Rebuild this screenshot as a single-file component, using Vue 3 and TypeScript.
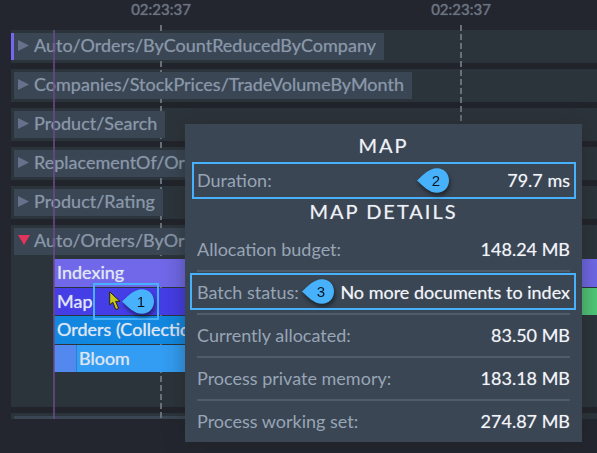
<script setup lang="ts">
import { ref } from 'vue'

interface Track {
  name: string
  active?: boolean
  expanded?: boolean
}

interface Detail {
  label: string
  value: string
  marker?: number
}

const times: string[] = ['02:23:37', '02:23:37']

const tracks = ref<Track[]>([
  { name: 'Auto/Orders/ByCountReducedByCompany', active: true },
  { name: 'Companies/StockPrices/TradeVolumeByMonth' },
  { name: 'Product/Search' },
  { name: 'ReplacementOf/Or' },
  { name: 'Product/Rating' },
  { name: 'Auto/Orders/ByOr', expanded: true },
])

const details: Detail[] = [
  { label: 'Allocation budget:', value: '148.24 MB' },
  { label: 'Batch status:', value: 'No more documents to index', marker: 3 },
  { label: 'Currently allocated:', value: '83.50 MB' },
  { label: 'Process private memory:', value: '183.18 MB' },
  { label: 'Process working set:', value: '274.87 MB' },
]

const dropPath =
  'M0 12.5 C6 7 12 0.2 20 0.2 C27 0.2 32 5.5 32 12.5 C32 19.5 27 24.8 20 24.8 C12 24.8 6 18 0 12.5 Z'
</script>

<template>
  <main class="view">
    <header class="scale">
      <time v-for="(t, i) in times" :key="i" class="tick">{{ t }}</time>
    </header>

    <section class="tracks">
      <div class="grid-lines" aria-hidden="true">
        <span v-for="(t, i) in times" :key="i" class="line-cell"><i class="dash"></i></span>
      </div>

      <div v-for="track in tracks" :key="track.name" class="track" :class="{ active: track.active, expanded: track.expanded }">
        <button type="button" class="name" :aria-expanded="!!track.expanded" @click="track.expanded = !track.expanded">
          <svg v-if="track.expanded" class="arrow" viewBox="0 0 12 12"><path d="M0 0H12L6 10Z" fill="#e0345c" /></svg>
          <svg v-else class="arrow" viewBox="0 0 12 12"><path d="M0 0L11 5.5L0 11Z" fill="#66728b" /></svg>
          <span>{{ track.name }}</span>
        </button>
        <div v-if="track.expanded" class="bars">
          <div class="bar indexing">Indexing</div>
          <div class="bar-row">
            <div class="bar map">
              <span>Map</span>
              <span class="frame frame-map">
                <svg class="cursor" viewBox="0 0 12 20"><path d="M0.7 0.8V14L3.8 11.2L6.8 18.6L9.6 17.4L6.6 10.4H11Z" fill="#c9c916" stroke="#26260c" stroke-width="1" /></svg>
                <svg class="drop" viewBox="0 0 32 25"><path :d="dropPath" fill="#47b2fb" /><text x="19" y="18" text-anchor="middle">1</text></svg>
              </span>
            </div>
            <div class="bar reduce"></div>
          </div>
          <div class="bar orders">Orders (Collectio</div>
          <div class="bar-row inner">
            <div class="bar stub"></div>
            <div class="bar bloom">Bloom</div>
          </div>
        </div>
      </div>

      <div class="track cut"><div class="cut-name"></div></div>
      <div class="start-line" aria-hidden="true"></div>
    </section>

    <aside class="tooltip" role="tooltip">
      <h2>MAP</h2>
      <dl>
        <div class="row duration">
          <dt>Duration:</dt>
          <dd>79.7 ms</dd>
          <span class="frame frame-duration"></span>
          <svg class="drop" viewBox="0 0 32 25"><path :d="dropPath" fill="#47b2fb" /><text x="19" y="18" text-anchor="middle">2</text></svg>
        </div>
      </dl>
      <h2 class="details-title">MAP DETAILS</h2>
      <dl>
        <div v-for="d in details" :key="d.label" class="row">
          <dt>{{ d.label }}</dt>
          <svg v-if="d.marker" class="drop" viewBox="0 0 32 25"><path :d="dropPath" fill="#47b2fb" /><text x="19" y="18" text-anchor="middle">{{ d.marker }}</text></svg>
          <dd>{{ d.value }}</dd>
          <span v-if="d.marker" class="frame frame-status"></span>
        </div>
      </dl>
    </aside>
  </main>
</template>

<style>
body {
  background: #23262f;
}
</style>

<style scoped>
.view {
  position: relative;
  min-height: 100vh;
  overflow: hidden;
  background: #23262f;
  font-family: Lato, sans-serif;
  font-size: 18px;
}
.scale {
  display: flex;
  height: 30px;
  padding-left: 11px;
}
.tick {
  flex: 0 0 300px;
  text-align: center;
  font-size: 15px;
  line-height: 18px;
  color: #6c7482;
  text-shadow: 0 0 1px #6c7482;
}
.tracks {
  position: relative;
  margin-left: 11px;
  display: flex;
  flex-direction: column;
  gap: 6px;
  background: #22242b;
}
.grid-lines {
  position: absolute;
  inset: -5px 0 0 0;
  display: flex;
  overflow: hidden;
  z-index: 1;
}
.line-cell {
  flex: 0 0 300px;
  display: flex;
  justify-content: center;
}
.dash {
  width: 2px;
  background: repeating-linear-gradient(#68707a 0 6px, transparent 6px 9px);
}
.track {
  padding: 3px;
  background: #2c343b;
}
.track.active {
  padding-left: 0;
}
.track.active .name {
  border-left: 3px solid #7468f0;
}
.track.expanded {
  padding-right: 0;
  padding-bottom: 35px;
}
.name {
  position: relative;
  z-index: 2;
  display: flex;
  align-items: center;
  gap: 4px;
  height: 27px;
  margin: 0;
  padding: 0 8px 2px 4px;
  border: 0;
  background: #3a4654;
  color: #8997a8;
  font: inherit;
  line-height: 25px;
  text-shadow: 0 0 1px rgba(137, 151, 168, 0.6);
  white-space: nowrap;
}
.arrow {
  width: 12px;
  height: 12px;
}
.bars {
  position: relative;
  z-index: 2;
  display: grid;
  grid-template-rows: repeat(4, 1fr);
  gap: 1px;
  height: 113px;
  margin: 4px 0 0 40px;
}
.bar {
  padding-left: 3px;
  line-height: 27px;
  color: #dfe6f5;
  text-shadow: 0 0 1px rgba(223, 230, 245, 0.8);
  white-space: nowrap;
}
.bar-row {
  display: flex;
}
.indexing {
  background: #7068e8;
}
.map {
  position: relative;
  flex: 0 0 400px;
  background: #453de6;
}
.reduce {
  flex: 1;
  background: #50c878;
}
.orders {
  background: #1187e0;
  margin-right: 20px;
}
.inner {
  margin-right: 20px;
}
.stub {
  flex: 0 0 19px;
  background: #5388ee;
}
.bloom {
  flex: 1;
  padding-left: 2px;
  background: #329df2;
  border-left: 1px solid #2b80cf;
}
.cut {
  padding-bottom: 0;
  padding-right: 0;
}
.cut-name {
  height: 3px;
  width: 200px;
  background: #3a4654;
}
.start-line {
  position: absolute;
  top: 0;
  bottom: 0;
  left: 42px;
  width: 2px;
  background: #6e4a8c;
  opacity: 0.75;
  z-index: 3;
}
.frame {
  position: absolute;
  box-sizing: border-box;
  border: 2px solid #47b2fb;
}
.frame-map {
  left: 39px;
  top: -5px;
  width: 66px;
  height: 37px;
  display: flex;
  align-items: center;
  justify-content: space-between;
  padding: 0 3px 0 14px;
  z-index: 4;
}
.cursor {
  width: 12px;
  height: 20px;
}
.drop {
  flex: none;
  width: 32px;
  height: 25px;
  overflow: visible;
  filter: drop-shadow(1px 3px 2px rgba(0, 0, 0, 0.5));
}
.drop text {
  font-family: "Liberation Sans", Arial, sans-serif;
  font-size: 15px;
  font-weight: 400;
  fill: #0a1420;
  text-shadow: none;
}
.tooltip {
  position: absolute;
  z-index: 5;
  top: 124px;
  left: 185px;
  right: 15px;
  box-sizing: border-box;
  padding: 8px 12px 0;
  background: #3a4654;
  box-shadow: 0 0 20px rgba(30, 32, 30, 0.4);
}
h2 {
  margin: 0 0 1px;
  text-align: center;
  font-size: 20px;
  line-height: 27px;
  font-weight: 400;
  letter-spacing: 2px;
  color: #eef1f5;
  text-shadow: 0 0 1px rgba(238, 241, 245, 0.5);
}
.details-title {
  margin-bottom: 8px;
  line-height: 19px;
}
dl {
  margin: 0;
}
.row {
  position: relative;
  display: flex;
  align-items: center;
  height: 39px;
  padding-bottom: 2px;
  border-bottom: 2px solid #505c6a;
}
.row:last-child {
  border-bottom: 0;
}
dt {
  color: #98a5b5;
}
dd {
  margin: 0 0 0 auto;
  color: #f1f4f8;
  text-shadow: 0 0 1px rgba(241, 244, 248, 0.5);
}
.row .drop {
  margin-left: 3px;
}
.duration .drop {
  position: absolute;
  right: 121px;
  margin: 0;
}
.duration {
  height: 40px;
}
.frame-duration {
  inset: 2px -6px 3px -5px;
}
.frame-status {
  inset: 1px -6px 3px -7px;
}
</style>
